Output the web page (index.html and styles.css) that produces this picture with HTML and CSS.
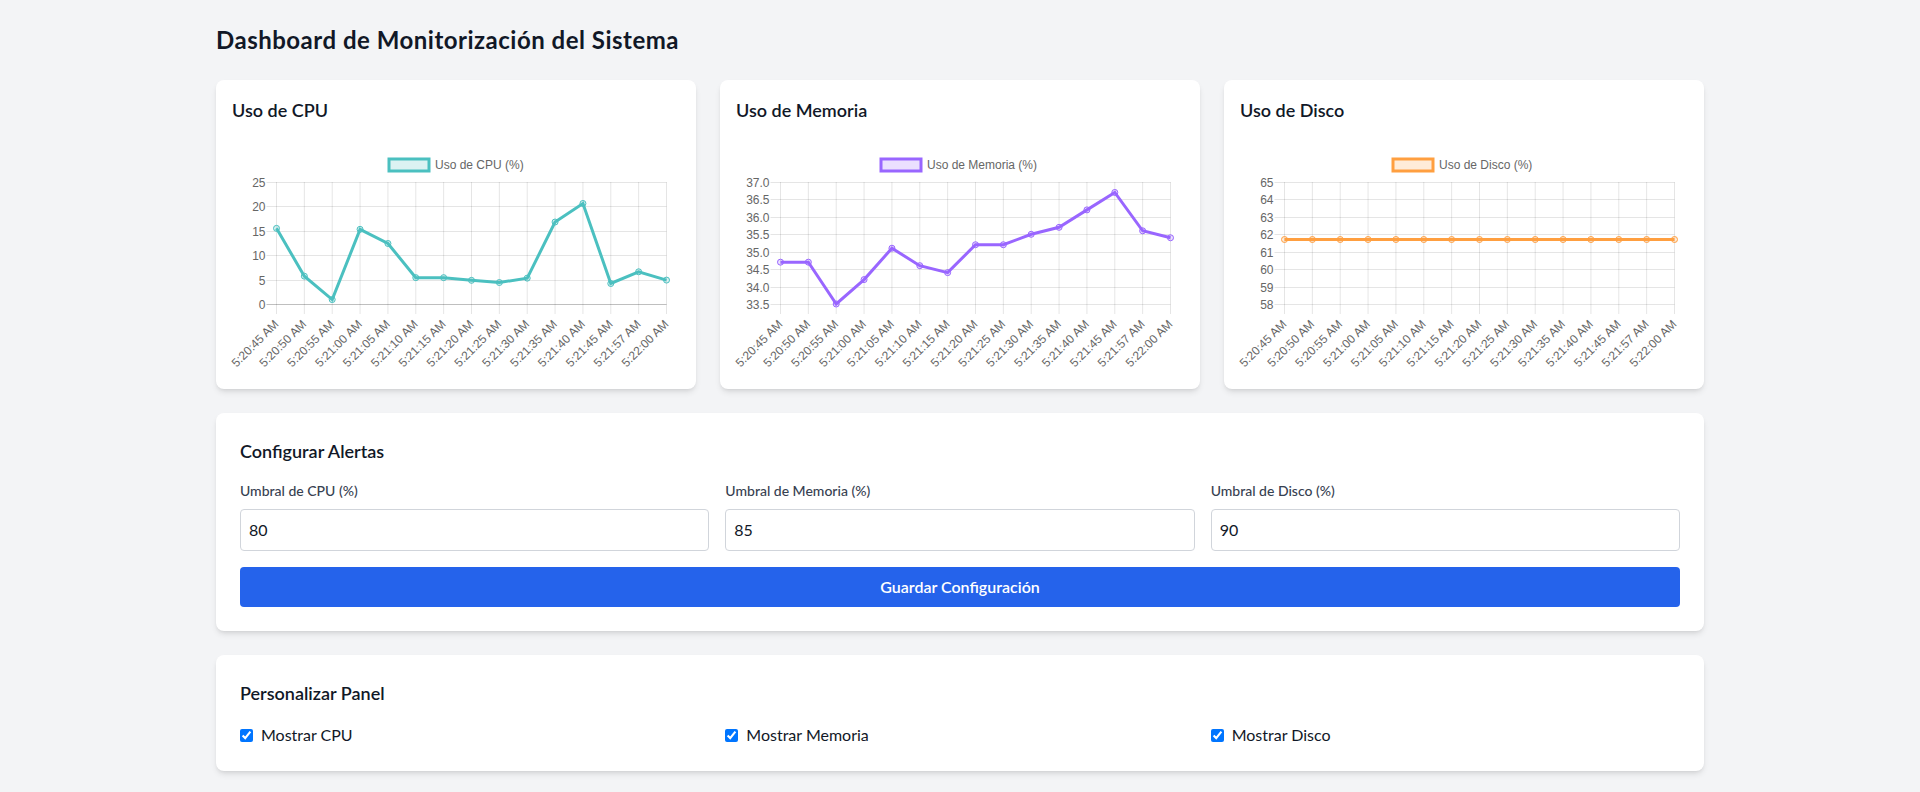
FILE: index.html
```html
<!DOCTYPE html>
<html lang="es">
<head>
<meta charset="utf-8">
<title>Dashboard de Monitorización del Sistema</title>
<link rel="stylesheet" href="styles.css">
</head>
<body>
<div class="container">
  <h1 class="page-title">Dashboard de Monitorización del Sistema</h1>

  <div class="charts">
    <div class="card chart-card">
      <h2 class="card-title">Uso de CPU</h2>
      <svg class="chart" id="cpuChart" width="448" height="224" viewBox="0 0 448 224"></svg>
    </div>
    <div class="card chart-card">
      <h2 class="card-title">Uso de Memoria</h2>
      <svg class="chart" id="memChart" width="448" height="224" viewBox="0 0 448 224"></svg>
    </div>
    <div class="card chart-card">
      <h2 class="card-title">Uso de Disco</h2>
      <svg class="chart" id="diskChart" width="448" height="224" viewBox="0 0 448 224"></svg>
    </div>
  </div>

  <div class="card panel">
    <h2 class="panel-title">Configurar Alertas</h2>
    <div class="form-grid">
      <div class="field">
        <label class="field-label" for="cpuThreshold">Umbral de CPU (%)</label>
        <input class="field-input" id="cpuThreshold" type="text" value="80">
      </div>
      <div class="field">
        <label class="field-label" for="memThreshold">Umbral de Memoria (%)</label>
        <input class="field-input" id="memThreshold" type="text" value="85">
      </div>
      <div class="field">
        <label class="field-label" for="diskThreshold">Umbral de Disco (%)</label>
        <input class="field-input" id="diskThreshold" type="text" value="90">
      </div>
    </div>
    <button class="btn" type="button">Guardar Configuración</button>
  </div>

  <div class="card panel">
    <h2 class="panel-title">Personalizar Panel</h2>
    <div class="check-grid">
      <label class="check"><input class="check-box" type="checkbox" checked>Mostrar CPU</label>
      <label class="check"><input class="check-box" type="checkbox" checked>Mostrar Memoria</label>
      <label class="check"><input class="check-box" type="checkbox" checked>Mostrar Disco</label>
    </div>
  </div>
</div>
<script src="script.js"></script>
</body>
</html>
```

FILE: styles.css
```css
* { box-sizing: border-box; }

body {
  margin: 0;
  background: #f3f4f6;
  color: #111827;
  font-family: Lato, "Noto Sans", sans-serif;
}

.container {
  max-width: 1536px;
  margin: 0 auto;
  padding: 24px;
}

.page-title {
  margin: 0 0 24px;
  font-size: 24px;
  line-height: 32px;
  font-weight: 700;
  letter-spacing: 0.5px;
}

.charts {
  display: grid;
  grid-template-columns: repeat(3, 1fr);
  gap: 24px;
  margin-bottom: 24px;
}

.card {
  background: #fff;
  border-radius: 8px;
  box-shadow: 0 4px 6px -1px rgba(0, 0, 0, 0.1), 0 2px 4px -2px rgba(0, 0, 0, 0.1);
}

.chart-card {
  padding: 16px;
}

.card-title,
.panel-title {
  margin: 0;
  font-size: 18px;
  line-height: 28px;
  font-weight: 600;
  color: #111827;
}

.card-title {
  margin-bottom: 25px;
}

.chart {
  display: block;
  overflow: visible;
  font-family: "Liberation Sans", Arial, sans-serif;
  font-size: 12px;
}

.chart .grid line {
  stroke: rgba(0, 0, 0, 0.1);
  stroke-width: 1;
}

.chart .grid line.zero {
  stroke: rgba(0, 0, 0, 0.25);
}

.chart text {
  fill: #666;
}

.chart .ytick {
  text-anchor: end;
  dominant-baseline: central;
}

.chart .xtick {
  text-anchor: end;
  dominant-baseline: central;
}

.chart .legend-text {
  dominant-baseline: central;
}

.chart .series {
  fill: none;
  stroke-width: 3;
}

.panel {
  padding: 24px;
  margin-bottom: 24px;
}

.panel-title {
  margin-bottom: 16px;
}

.form-grid,
.check-grid {
  display: grid;
  grid-template-columns: repeat(3, 1fr);
  gap: 16px;
}

.field-label {
  display: block;
  margin-bottom: 8px;
  font-size: 14px;
  line-height: 20px;
  font-weight: 500;
  color: #374151;
}

.field-input {
  display: block;
  width: 100%;
  padding: 8px;
  border: 1px solid #d1d5db;
  border-radius: 4px;
  font: inherit;
  font-size: 16px;
  line-height: 24px;
  color: #111827;
  background: #fff;
}

.btn {
  display: block;
  width: 100%;
  margin-top: 16px;
  padding: 8px;
  border: 0;
  border-radius: 4px;
  background: #2563eb;
  color: #fff;
  font: inherit;
  font-size: 16px;
  line-height: 24px;
  font-weight: 600;
}

.check {
  display: flex;
  align-items: center;
  font-size: 16px;
  line-height: 24px;
  color: #111827;
}

.check-box {
  width: 13px;
  height: 13px;
  margin: 0 8px 0 0;
}
```

FILE: script.js
```js
(function () {
  var labels = ['5:20:45 AM', '5:20:50 AM', '5:20:55 AM', '5:21:00 AM', '5:21:05 AM',
    '5:21:10 AM', '5:21:15 AM', '5:21:20 AM', '5:21:25 AM', '5:21:30 AM',
    '5:21:35 AM', '5:21:40 AM', '5:21:45 AM', '5:21:57 AM', '5:22:00 AM'];

  var disk = [];
  for (var k = 0; k < 15; k++) disk.push(61.7);

  var charts = [
    { id: 'cpuChart', label: 'Uso de CPU (%)', color: '75,192,192', min: 0, max: 25, step: 5, dec: 0, legendX: 157,
      data: [15.5, 5.7, 0.9, 15.3, 12.4, 5.4, 5.4, 4.85, 4.4, 5.3, 16.8, 20.6, 4.2, 6.6, 4.9] },
    { id: 'memChart', label: 'Uso de Memoria (%)', color: '153,102,255', min: 33.5, max: 37, step: 0.5, dec: 1, legendX: 145,
      data: [34.7, 34.7, 33.5, 34.2, 35.1, 34.6, 34.4, 35.2, 35.2, 35.5, 35.7, 36.2, 36.7, 35.6, 35.4] },
    { id: 'diskChart', label: 'Uso de Disco (%)', color: '255,159,64', min: 58, max: 65, step: 1, dec: 0, legendX: 153,
      data: disk }
  ];

  var NS = 'http://www.w3.org/2000/svg';
  var L = 44.5, R = 434.5, T = 33, B = 155;

  function el(tag, attrs, parent) {
    var e = document.createElementNS(NS, tag);
    for (var a in attrs) e.setAttribute(a, attrs[a]);
    parent.appendChild(e);
    return e;
  }

  charts.forEach(function (c) {
    var svg = document.getElementById(c.id);
    var dx = (R - L) / (labels.length - 1);
    var yOf = function (v) { return B - (v - c.min) / (c.max - c.min) * (B - T); };

    var grid = el('g', { 'class': 'grid' }, svg);
    labels.forEach(function (_, i) {
      var x = L + i * dx;
      el('line', { x1: x, x2: x, y1: T, y2: B + 10 }, grid);
    });
    var n = Math.round((c.max - c.min) / c.step);
    for (var j = 0; j <= n; j++) {
      var v = c.min + j * c.step;
      var y = Math.round(yOf(v)) + 0.5;
      el('line', { x1: L - 10, x2: R, y1: y, y2: y, 'class': v === 0 ? 'zero' : '' }, grid);
      var t = el('text', { x: L - 11, y: y, 'class': 'ytick' }, svg);
      t.textContent = v.toFixed(c.dec);
    }

    labels.forEach(function (lb, i) {
      var x = L + i * dx;
      var t = el('text', { 'class': 'xtick', transform: 'translate(' + x + ' ' + (B + 18) + ') rotate(-45)' }, svg);
      t.textContent = lb;
    });

    el('rect', { x: c.legendX, y: 10, width: 40, height: 12,
      fill: 'rgba(' + c.color + ',0.2)', stroke: 'rgb(' + c.color + ')', 'stroke-width': 3 }, svg);
    var lt = el('text', { x: c.legendX + 46, y: 16, 'class': 'legend-text' }, svg);
    lt.textContent = c.label;

    var pts = c.data.map(function (v, i) { return (L + i * dx).toFixed(2) + ',' + yOf(v).toFixed(2); }).join(' ');
    el('polyline', { points: pts, 'class': 'series', stroke: 'rgb(' + c.color + ')' }, svg);

    c.data.forEach(function (v, i) {
      el('circle', { cx: L + i * dx, cy: yOf(v), r: 3,
        fill: 'rgba(' + c.color + ',0.2)', stroke: 'rgb(' + c.color + ')', 'stroke-width': 1 }, svg);
    });
  });
})();
```
